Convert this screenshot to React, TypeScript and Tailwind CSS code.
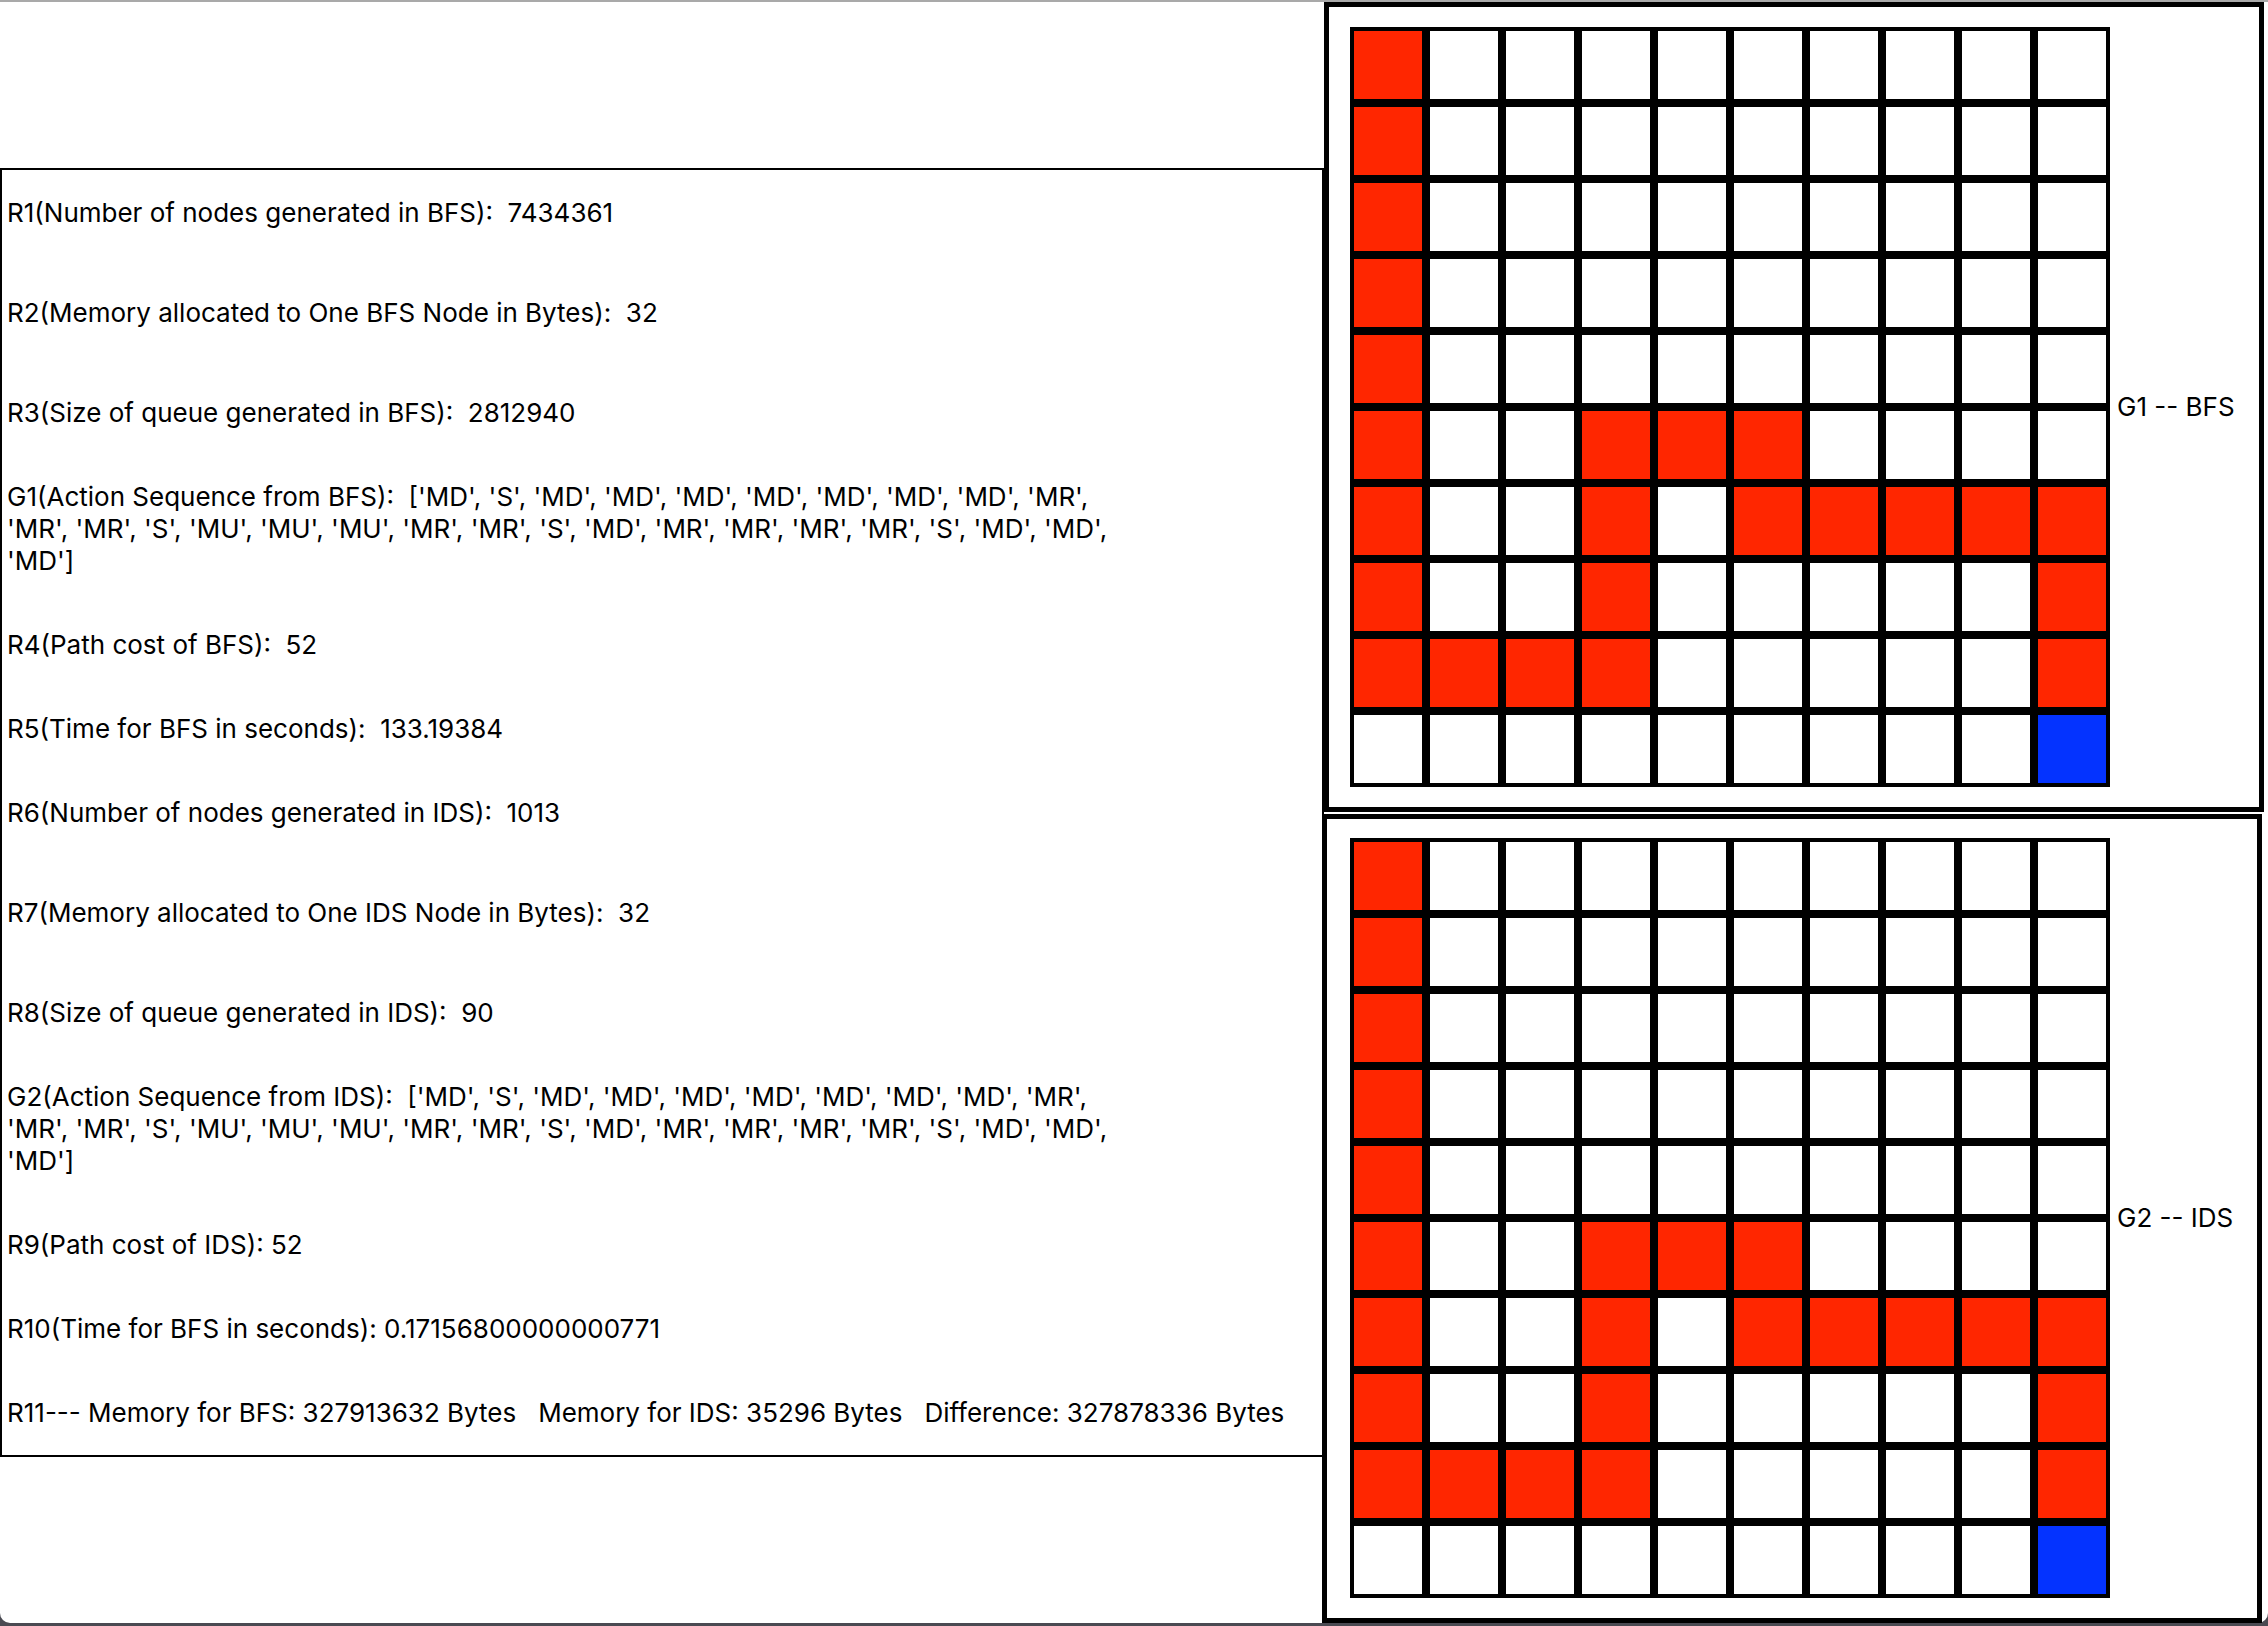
const RED = new Set([
  "0-0", "1-0", "2-0", "3-0", "4-0",
  "5-0", "5-3", "5-4", "5-5",
  "6-0", "6-3", "6-5", "6-6", "6-7", "6-8", "6-9",
  "7-0", "7-3", "7-9",
  "8-0", "8-1", "8-2", "8-3", "8-9",
]);

const Grid = () => {
  const cells = [];
  for (let r = 0; r < 10; r++) {
    for (let c = 0; c < 10; c++) {
      const key = `${r}-${c}`;
      let bg = "bg-white";
      if (RED.has(key)) bg = "bg-[#ff2600]";
      if (r === 9 && c === 9) bg = "bg-[#0433ff]";
      cells.push(<div key={key} className={`border-4 border-black ${bg}`} />);
    }
  }
  return (
    <div className="grid grid-cols-10 grid-rows-10 w-[760px] h-[760px] shrink-0">{cells}</div>
  );
};

const Board = ({ label, className }: { label: string; className?: string }) => (
  <div className={`w-[940px] h-[810px] border-[5px] border-black flex items-center ${className ?? ""}`}>
    <Grid />
    <span className="ml-[7px] text-[26px] leading-[32px]">{label}</span>
  </div>
);

const Line = ({ children, mb }: { children: React.ReactNode; mb: string }) => (
  <p className={`leading-[32px] whitespace-pre ${mb}`}>{children}</p>
);

export default function App() {
  return (
    <div className="w-[2268px] h-[1626px] bg-[#4a4a52] overflow-hidden" style={{ fontFamily: "Inter, 'Liberation Sans', sans-serif" }}>
      <div className="h-[1623px] bg-white rounded-b-[10px] border-t-2 border-[#a9a9a9] flex text-black text-[26px]">
        {/* Results text */}
        <div className="w-[1324px] shrink-0 pt-[166px]">
          <div className="border-2 border-black pt-[27px] pb-[26px] pl-[5px]">
            <Line mb="mb-[68px]">R1(Number of nodes generated in BFS):  7434361</Line>
            <Line mb="mb-[68px]">R2(Memory allocated to One BFS Node in Bytes):  32</Line>
            <Line mb="mb-[52px]">R3(Size of queue generated in BFS):  2812940</Line>
            <Line mb="mb-[52px]">
              G1(Action Sequence from BFS):  ['MD', 'S', 'MD', 'MD', 'MD', 'MD', 'MD', 'MD', 'MD', 'MR',{"\n"}
              'MR', 'MR', 'S', 'MU', 'MU', 'MU', 'MR', 'MR', 'S', 'MD', 'MR', 'MR', 'MR', 'MR', 'S', 'MD', 'MD',{"\n"}
              'MD']
            </Line>
            <Line mb="mb-[52px]">R4(Path cost of BFS):  52</Line>
            <Line mb="mb-[52px]">R5(Time for BFS in seconds):  133.19384</Line>
            <Line mb="mb-[68px]">R6(Number of nodes generated in IDS):  1013</Line>
            <Line mb="mb-[68px]">R7(Memory allocated to One IDS Node in Bytes):  32</Line>
            <Line mb="mb-[52px]">R8(Size of queue generated in IDS):  90</Line>
            <Line mb="mb-[52px]">
              G2(Action Sequence from IDS):  ['MD', 'S', 'MD', 'MD', 'MD', 'MD', 'MD', 'MD', 'MD', 'MR',{"\n"}
              'MR', 'MR', 'S', 'MU', 'MU', 'MU', 'MR', 'MR', 'S', 'MD', 'MR', 'MR', 'MR', 'MR', 'S', 'MD', 'MD',{"\n"}
              'MD']
            </Line>
            <Line mb="mb-[52px]">R9(Path cost of IDS): 52</Line>
            <Line mb="mb-[52px]">R10(Time for BFS in seconds): 0.17156800000000771</Line>
            <Line mb="mb-0">R11--- Memory for BFS: 327913632 Bytes   Memory for IDS: 35296 Bytes   Difference: 327878336 Bytes</Line>
          </div>
        </div>

        {/* Grids */}
        <div className="flex flex-col gap-[2px]">
          <Board label="G1 -- BFS" className="pl-[21px]" />
          <Board label="G2 -- IDS" className="-ml-[2px] pl-[23px]" />
        </div>
      </div>
    </div>
  );
}
